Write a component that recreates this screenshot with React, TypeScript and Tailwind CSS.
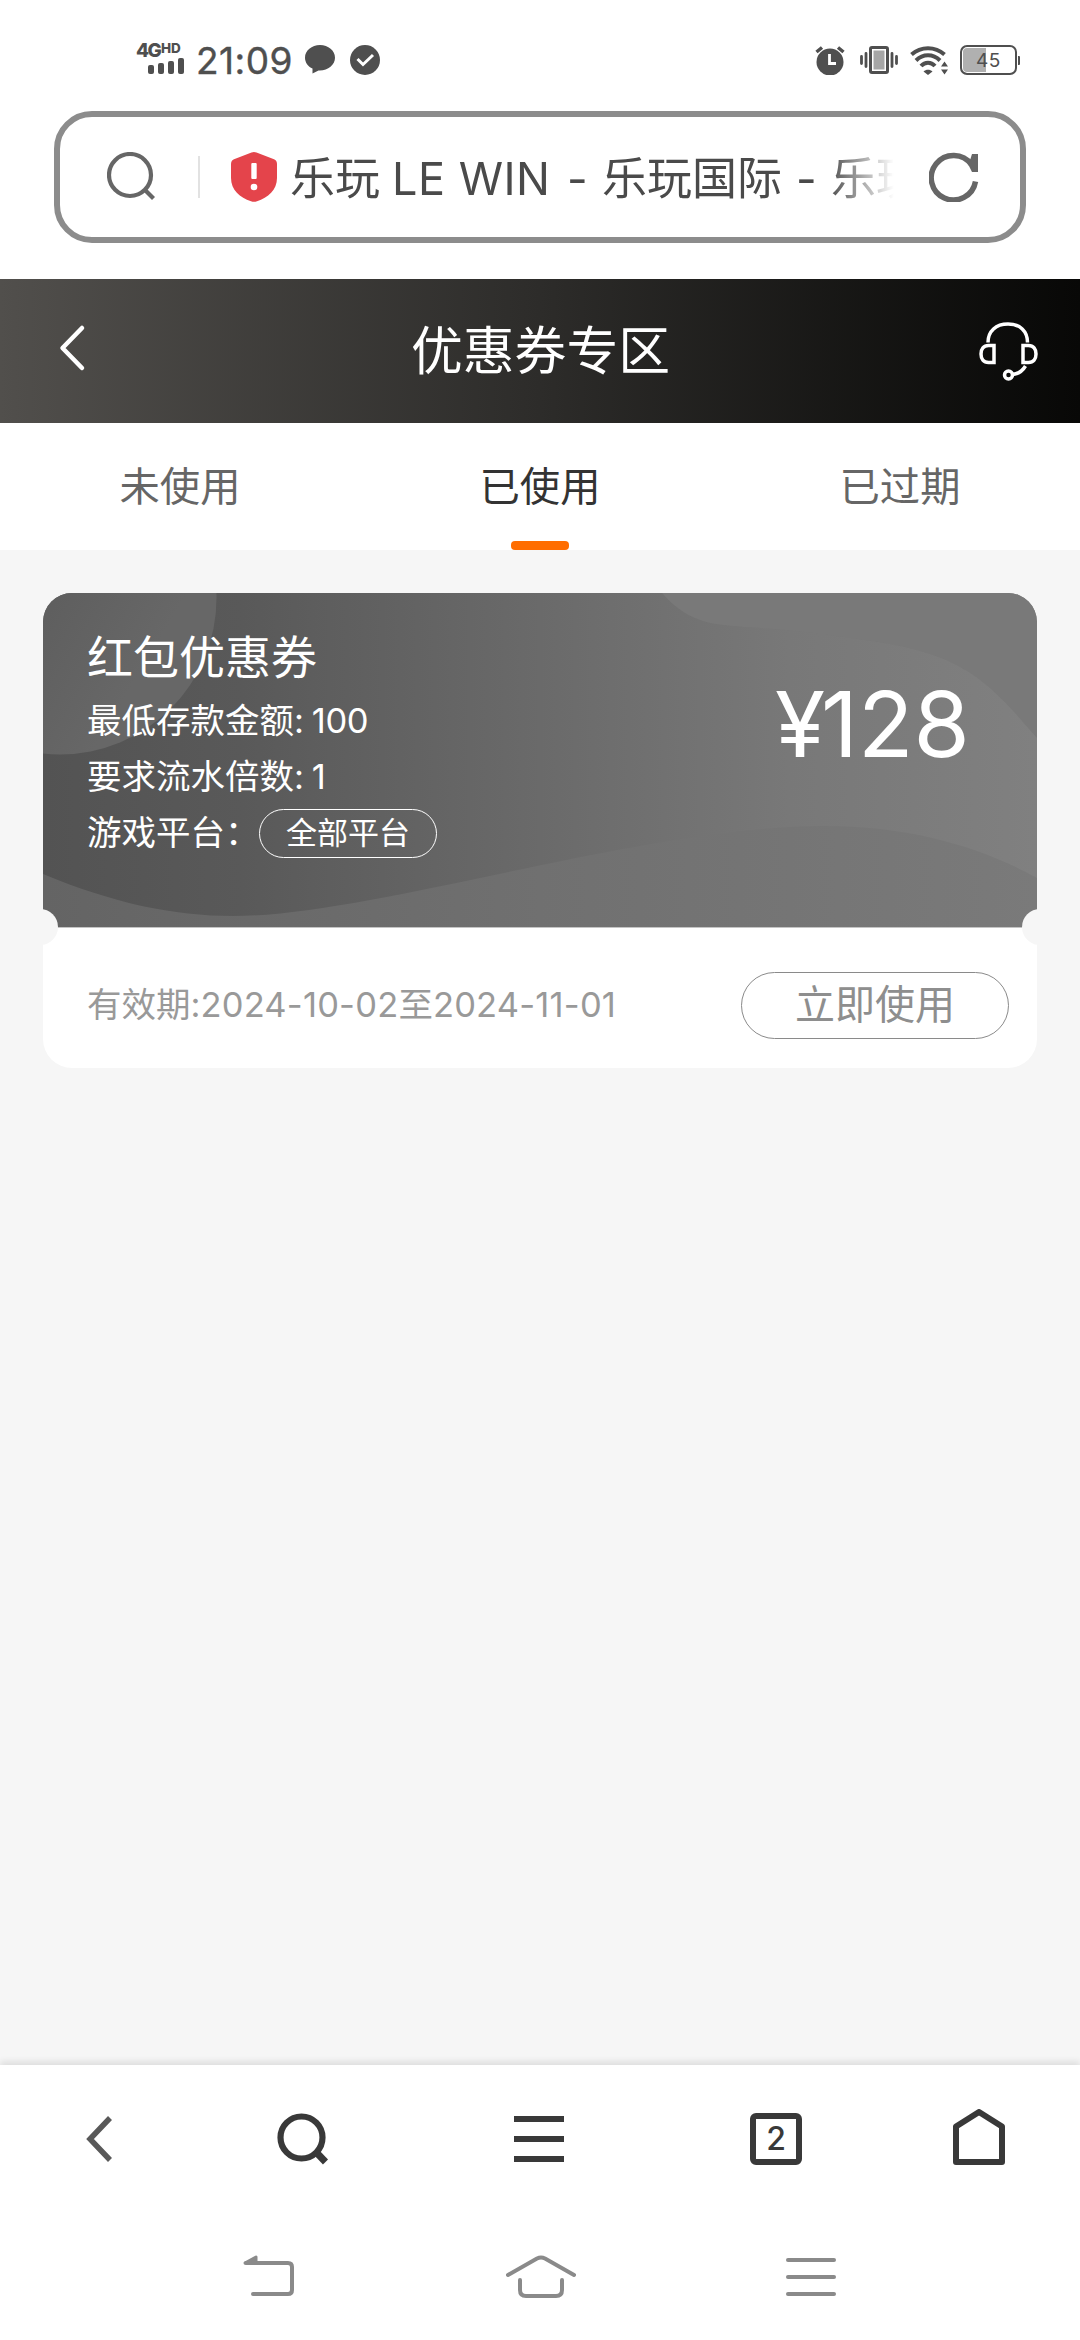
import clsx from "clsx";

const tabs = [
  { key: "unused", label: "未使用" },
  { key: "used", label: "已使用" },
  { key: "expired", label: "已过期" },
];

const coupon = {
  title: "红包优惠券",
  minDeposit: "100",
  turnover: "1",
  platform: "全部平台",
  amount: "128",
  validity: ["2024-10-02", "2024-11-01"],
};

const StatusBar = () => (
  <div className="flex h-[111px] shrink-0 items-start text-[#4f4f4f]">
    {/* Signal */}
    <div className="ml-[136px] mt-[41px] w-[48px]">
      <div className="flex h-[16px] items-start font-extrabold">
        <span className="w-[25px] text-[19px] leading-[19px] tracking-[-1.500px]">4G</span>
        <span className="text-[13.500px] leading-[14px]">HD</span>
      </div>
      <div className="ml-[12px] flex h-[17px] items-end gap-[4px]">
        <div className="h-[9px] w-[6px] rounded-[2px] bg-[#4f4f4f]" />
        <div className="h-[11px] w-[6px] rounded-[2px] bg-[#4f4f4f]" />
        <div className="h-[13px] w-[6px] rounded-[2px] bg-[#4f4f4f]" />
        <div className="h-[16px] w-[6px] rounded-[2px] bg-[#4f4f4f]" />
      </div>
    </div>
    <span className="ml-[12px] mt-[41px] w-[99px] text-[37px] leading-[40px] tracking-[0.500px] [-webkit-text-stroke:0.4px_#4f4f4f]">21:09</span>
    <svg className="ml-[10px] mt-[44px]" width="30" height="30" viewBox="0 0 30 30" fill="currentColor">
      <path d="M15 1C6.700 1 0 6.600 0 13.700C0 18.300 3 22.500 7.500 24.600L7.500 29.500L13.500 26.400C22.500 27 30 21 30 13.700C30 6.600 23.300 1 15 1Z" />
    </svg>
    <svg className="ml-[15px] mt-[45px]" width="30" height="30" viewBox="0 0 30 30" fill="none">
      <circle cx="15" cy="15" r="15" fill="currentColor" />
      <path d="M7.500 14L13 19.500L23 10" stroke="white" strokeWidth="3" />
    </svg>

    <svg className="ml-[435px] mt-[45px]" width="30" height="30" viewBox="0 0 30 30" fill="none">
      <circle cx="15" cy="17" r="13.500" fill="currentColor" />
      <path d="M1.500 7L7 2.500M28.500 7L23 2.500" stroke="currentColor" strokeWidth="3.500" />
      <path d="M14.500 9V18.500H21" stroke="white" strokeWidth="2.800" />
    </svg>
    <svg className="ml-[15px] mt-[45px]" width="38" height="30" viewBox="0 0 38 30" fill="none">
      <rect x="10.500" y="2.500" width="17" height="25" rx="1.500" stroke="currentColor" strokeWidth="3" />
      <rect x="13.500" y="5.500" width="11" height="19" fill="#a6a6a6" />
      <path d="M6 8.500V21.500M32 8.500V21.500M1.500 11.500V18.500M36.500 11.500V18.500" stroke="currentColor" strokeWidth="2.800" strokeLinecap="round" />
    </svg>
    <svg className="ml-[12px] mt-[45px]" width="39" height="30" viewBox="0 0 39 30" fill="none">
      <path d="M1.500 9.500C11 1 25 1 34.500 9.500M6 15.500C13 8.500 23 8.500 30 15.500M11 21C15 16.500 21 16.500 25 21" stroke="currentColor" strokeWidth="4" />
      <path d="M13.500 26.500C16 24 20 24 22.500 26.500L18 30Z" fill="currentColor" />
      <path d="M31 21.500L34.500 16.500L38 21.500ZM31 24.500L34.500 29.500L38 24.500Z" fill="currentColor" />
    </svg>
    <div className="ml-[11px] mt-[45px] flex items-center">
      <div className="flex h-[30px] w-[57px] items-center justify-center rounded-[7px] border-2 border-[#4f4f4f] bg-[linear-gradient(90deg,#b0b0b0_46%,white_46%)] text-[19px] leading-none tracking-[0.500px] ring-1 ring-inset ring-white">
        45
      </div>
      <div className="ml-px h-[9px] w-[2px] rounded-r-[1px] bg-[#4f4f4f]" />
    </div>
  </div>
);

const AddressBar = () => (
  <div className="mx-[54px] flex h-[132px] shrink-0 items-center rounded-[38px] border-[6px] border-[#8c8c8c] bg-white">
    <svg className="ml-[47px]" width="50" height="50" viewBox="0 0 50 50" fill="none" stroke="#666" strokeWidth="4.200">
      <circle cx="23" cy="23" r="21" />
      <path d="M37.500 37.500L46.500 46.500" />
    </svg>
    <div className="ml-[41px] h-[42px] w-[2px] bg-[#e2e2e2]" />
    <svg className="ml-[31px]" width="46" height="50" viewBox="0 0 46 50">
      <path
        d="M20.500 0.600Q23 -0.400 25.500 0.600L43 7.200Q46 8.400 46 12V26C46 38 37 45.500 26 49.300Q23 50.400 20 49.300C9 45.500 0 38 0 26V12Q0 8.400 3 7.200Z"
        fill="#e4444b"
      />
      <rect x="20.300" y="11" width="5.400" height="16" rx="1" fill="white" />
      <circle cx="23" cy="35" r="3.300" fill="white" />
    </svg>
    <div className="ml-[13px] mt-[4px] flex w-[604px] overflow-hidden whitespace-nowrap text-[45px] leading-[60px] text-[#4a4a4a] [mask-image:linear-gradient(90deg,black_89%,transparent)]">
      <span className="w-[102px] shrink-0">乐玩</span>
      <span className="w-[175px] shrink-0 tracking-[0.500px]">LE WIN</span>
      <span className="w-[35px] shrink-0">-</span>
      <span className="w-[194px] shrink-0">乐玩国际</span>
      <span className="w-[35px] shrink-0">-</span>
      <span className="shrink-0">乐玩</span>
    </div>
    <svg className="ml-[35px]" width="50" height="50" viewBox="0 0 50 50" fill="none" stroke="#666" strokeWidth="5.500">
      <path d="M42.500 12.500A22.300 22.300 0 1 0 46.500 29.500" />
      <path d="M43 2H49V20H43L39.500 13Z" fill="#666" stroke="none" />
    </svg>
  </div>
);

const PageHeader = () => (
  <header className="mt-[36px] flex h-[144px] shrink-0 items-center justify-between bg-linear-to-r from-[#514f4c] via-[#2d2c2a] to-[#080807] pl-[58px] pr-[41px] text-white">
    <svg className="-mt-[7px]" width="44" height="48" viewBox="0 0 44 48" fill="none" stroke="currentColor" strokeWidth="4.500" strokeLinecap="round" strokeLinejoin="round">
      <path d="M24 4L4.500 24L24 44" />
    </svg>
    <h1 className="text-[51.800px] leading-[60px]">优惠券专区</h1>
    <svg width="60" height="60" viewBox="0 0 60 60" fill="none" stroke="currentColor" strokeWidth="3.500">
      <path d="M9 21.500C9 10 17 3 29 3S48.500 10 48.500 21.500" />
      <path d="M15 24.500V41.500H9.500C4.500 41.500 2 38 2 33S4.500 24.500 9.500 24.500Z" />
      <path d="M44 24.500V41.500H49.500C54.500 41.500 57 38 57 33S54.500 24.500 49.500 24.500Z" />
      <path d="M46.500 45C43.500 50 39 53 33.500 53.500" />
      <circle cx="29.500" cy="54" r="4" />
    </svg>
  </header>
);

const Tabs = ({ active }: { active: string }) => (
  <nav className="grid h-[127px] shrink-0 grid-cols-3 bg-white">
    {tabs.map((tab) => (
      <button
        key={tab.key}
        className={clsx(
          "flex flex-col items-center justify-between pt-[34px] text-[40.300px] leading-[60px]",
          tab.key === active ? "text-[#333]" : "text-[#666]"
        )}
      >
        {tab.label}
        {tab.key === active && <div className="h-[9px] w-[58px] rounded-[4px] bg-[#ff6d00]" />}
      </button>
    ))}
  </nav>
);

const CouponBackdrop = () => (
  <svg className="absolute inset-0" width="994" height="334" viewBox="0 0 994 334">
    <defs>
      <linearGradient id="base">
        <stop offset="0" stopColor="#535353" />
        <stop offset="0.200" stopColor="#595959" />
        <stop offset="0.500" stopColor="#6a6a6a" />
        <stop offset="0.750" stopColor="#787878" />
        <stop offset="1" stopColor="#808080" />
      </linearGradient>
      <linearGradient id="wave">
        <stop offset="0" stopColor="#646464" />
        <stop offset="0.500" stopColor="#707070" />
        <stop offset="1" stopColor="#7a7a7a" />
      </linearGradient>
      <linearGradient id="bubble" x1="0" y1="0.300" x2="1" y2="0.900">
        <stop offset="0.300" stopColor="#5b5b5b" />
        <stop offset="0.750" stopColor="#676767" />
      </linearGradient>
    </defs>
    <rect width="994" height="334" fill="url(#base)" />
    <circle cx="17" cy="5" r="156.500" fill="url(#bubble)" />
    <path d="M0 281C70 310 130 323 190 323C330 323 600 233 780 233C870 233 940 255 994 285V334H0Z" fill="url(#wave)" />
    <path d="M619 0C635 18 652 29 680 32C720 36 750 36 777 41C830 48 880 53 917 74C950 92 970 118 994 145V0Z" fill="#797979" />
  </svg>
);

const CouponCard = () => (
  <section className="relative mx-[43px] mt-[43px] shrink-0 overflow-hidden rounded-[29px] bg-white">
    <div className="relative h-[334px]">
      <CouponBackdrop />
      <div className="relative flex justify-between pl-[44px] pt-[33px] text-white">
        <div className="text-[34.500px] leading-[56px]">
          <h2 className="mb-[5px] text-[46px] leading-[62px]">{coupon.title}</h2>
          <p>
            最低存款金额: <span className="-ml-[2px] tracking-[-0.300px]">{coupon.minDeposit}</span>
          </p>
          <p>
            要求流水倍数: <span className="-ml-[2px]">{coupon.turnover}</span>
          </p>
          <div className="flex items-center whitespace-nowrap">
            <span className="w-[172px]">游戏平台：</span>
            <span className="flex h-[49px] w-[178px] items-center justify-center rounded-full border border-white text-[31px] leading-[40px]">
              {coupon.platform}
            </span>
          </div>
        </div>
        <div className="mt-[42px] w-[262px] text-[91px] leading-[112px]">
          <span className="tracking-[-4px]">¥</span>
          {coupon.amount}
        </div>
      </div>
    </div>
    <div className="flex h-[141px] items-center justify-between border-t border-[#c4c4c4] pl-[44px] pr-[28px] pb-[8px] pt-[22px]">
      <span className="text-[34.500px] leading-[50px] text-[#999]">
        有效期:<span className="tracking-[0.200px]">{coupon.validity[0]}</span>至<span className="tracking-[0.200px]">{coupon.validity[1]}</span>
      </span>
      <button className="h-[67px] w-[268px] rounded-full border border-[#8a8a8a] text-[40px] leading-[60px] text-[#8e8e8e]">
        立即使用
      </button>
    </div>
    {/* Ticket notches on the tear line */}
    <div className="absolute -left-[21px] top-[316px] size-[36px] rounded-full bg-[#f6f6f6]" />
    <div className="absolute -right-[21px] top-[316px] size-[36px] rounded-full bg-[#f6f6f6]" />
  </section>
);

const BrowserBar = () => (
  <div className="relative flex h-[148px] shrink-0 items-center bg-white text-[#393939] shadow-[0_-4px_6px_rgba(0,0,0,0.09)]">
    <svg className="ml-[86px]" width="26" height="48" viewBox="0 0 26 48" fill="none" stroke="#595959" strokeWidth="5.500">
      <path d="M24 3L4 24L24 45" />
    </svg>
    <svg className="ml-[165px]" width="52" height="54" viewBox="0 0 52 54" fill="none" stroke="currentColor" strokeWidth="6.200">
      <circle cx="24.500" cy="25.500" r="21" />
      <path d="M38.500 39.500L48.500 50" strokeWidth="7" />
    </svg>
    <div className="ml-[185px] flex flex-col gap-[14px]">
      <div className="h-[6px] w-[50px] bg-[#393939]" />
      <div className="h-[6px] w-[50px] bg-[#393939]" />
      <div className="h-[6px] w-[50px] bg-[#393939]" />
    </div>
    <div className="ml-[186px] flex h-[52px] w-[52px] items-center justify-center rounded-[6px] border-[6px] border-[#393939] text-[32px] font-medium leading-none">
      2
    </div>
    <svg className="-mt-[4px] ml-[151px]" width="52" height="56" viewBox="0 0 52 56" fill="none" stroke="currentColor" strokeWidth="6" strokeLinejoin="round">
      <path d="M3 17.500L26 3L49 17.500V53H3Z" />
    </svg>
  </div>
);

const SystemNav = () => (
  <div className="relative flex h-[127px] shrink-0 items-start bg-white pt-[42px]">
    <svg className="ml-[243px]" width="52" height="44" viewBox="0 0 52 44" fill="none" stroke="#8a8a8a" strokeWidth="4" strokeLinecap="round" strokeLinejoin="round">
      <path d="M3 8H45Q49 8 49 12V35Q49 39 45 39H10" />
      <path d="M2 8L13 2V8Z" strokeWidth="3" fill="#8a8a8a" />
    </svg>
    <svg className="ml-[211px]" width="70" height="44" viewBox="0 0 70 44" fill="none" stroke="#8a8a8a" strokeWidth="4" strokeLinecap="round" strokeLinejoin="round">
      <path d="M2 20L31 3.500Q35 1.500 39 3.500L68 20" />
      <path d="M14 25V35Q14 41 20 41H50Q56 41 56 35V25" />
    </svg>
    <div className="ml-[210px] mt-[3px] flex flex-col gap-[13px]">
      <div className="h-[4px] w-[50px] rounded-full bg-[#8a8a8a]" />
      <div className="h-[4px] w-[50px] rounded-full bg-[#8a8a8a]" />
      <div className="h-[4px] w-[50px] rounded-full bg-[#8a8a8a]" />
    </div>
  </div>
);

const App = () => {
  return (
    <div className="flex h-[2340px] w-[1080px] flex-col overflow-hidden bg-white font-['Inter','Noto_Sans_CJK_SC',sans-serif]">
      <StatusBar />
      <AddressBar />
      <PageHeader />
      <Tabs active="used" />
      <main className="flex flex-1 flex-col bg-[#f6f6f6]">
        <CouponCard />
      </main>
      <BrowserBar />
      <SystemNav />
    </div>
  );
};

export default App;
